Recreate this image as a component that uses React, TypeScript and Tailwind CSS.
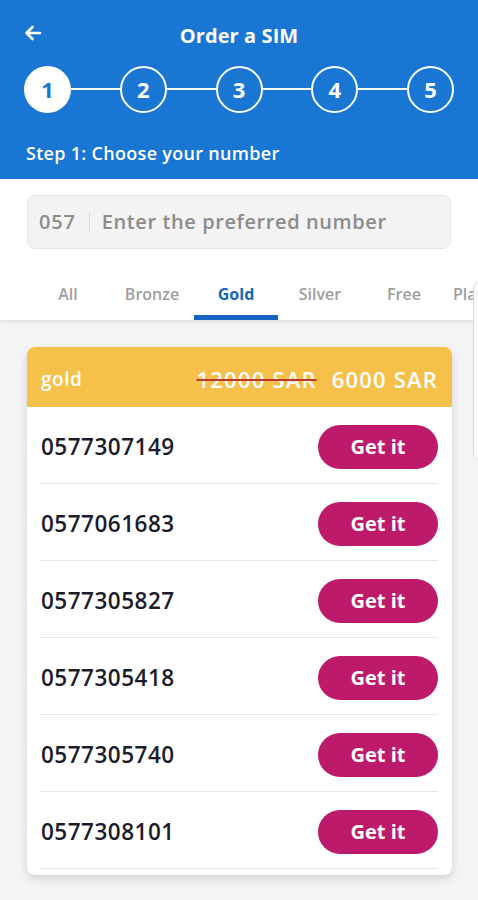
import React from "react";

const numbers = [
  "0577307149",
  "0577061683",
  "0577305827",
  "0577305418",
  "0577305740",
  "0577308101",
];

const tabs = ["All", "Bronze", "Gold", "Silver", "Free", "Platinum"];

export default function App() {
  return (
    <div
      className="relative w-[478px] h-[900px] overflow-hidden bg-[#f4f4f4]"
      style={{ fontFamily: '"Open Sans", "Noto Sans", sans-serif' }}
    >
      {/* Header */}
      <div className="bg-[#1976d2] h-[179px] flex flex-col text-white">
        <div className="relative h-[65px] flex justify-center pt-[22px]">
          <svg
            className="absolute left-[24px] top-[25px]"
            width="18"
            height="16"
            viewBox="0 0 18 16"
            fill="none"
            stroke="white"
            strokeWidth="2.6"
            strokeLinecap="round"
            strokeLinejoin="round"
          >
            <path d="M16 8H2.5M8.5 2L2.5 8l6 6" />
          </svg>
          <div className="text-[20px] leading-[28px] font-bold tracking-[0.1px]">Order a SIM</div>
        </div>
        <div className="flex items-center px-[24px] h-[48px]">
          {[1, 2, 3, 4, 5].map((n, i) => (
            <React.Fragment key={n}>
              {i > 0 && <div className="flex-1 h-[2px] bg-white" />}
              <div
                className={
                  n === 1
                    ? "w-[47px] h-[47px] rounded-full bg-white text-[#1976d2] flex items-center justify-center text-[22px] font-bold"
                    : "w-[47px] h-[47px] rounded-full border-2 border-white text-white flex items-center justify-center text-[22px] font-bold"
                }
              >
                {n}
              </div>
            </React.Fragment>
          ))}
        </div>
        <div className="mt-[28px] px-[26px] text-[18px] leading-[24px] font-semibold tracking-[0.3px]">
          Step 1: Choose your number
        </div>
      </div>

      {/* White area with input and tabs */}
      <div className="bg-white pt-[16px] shadow-[0_2px_3px_rgba(0,0,0,0.08)] relative z-10">
        <div className="mx-[27px] h-[54px] rounded-[8px] bg-[#f3f3f3] border border-[#e4e4e4] flex items-center pl-[11px]">
          <span className="text-[20px] text-[#8c8c8c] font-semibold tracking-[0.8px]">057</span>
          <span className="w-[1px] h-[22px] bg-[#dcdcdc] ml-[13px] mr-[12px]" />
          <span className="text-[20px] text-[#8c8c8c] font-semibold tracking-[0.6px]">
            Enter the preferred number
          </span>
        </div>
        <div className="mt-[21px] flex pl-[26px] overflow-hidden whitespace-nowrap">
          {tabs.map((t) => (
            <div
              key={t}
              className="w-[84px] shrink-0 h-[50px] flex flex-col items-center justify-end"
            >
              <div
                className={
                  t === "Gold"
                    ? "text-[16px] font-bold text-[#1565c0] leading-[20px] mb-[11px]"
                    : "text-[16px] font-semibold text-[#9e9e9e] leading-[20px] mb-[11px]"
                }
              >
                {t}
              </div>
              <div
                className={
                  t === "Gold" ? "w-full h-[5px] bg-[#1565c0]" : "w-full h-[5px] bg-transparent"
                }
              />
            </div>
          ))}
        </div>
      </div>

      {/* Card */}
      <div className="px-[27px] pt-[27px] pr-[26px]">
        <div className="bg-white rounded-[8px] shadow-[0_4px_10px_rgba(0,0,0,0.14)] overflow-hidden">
          <div className="h-[60px] bg-[#f5c14b] flex items-center px-[14px] text-white pt-[4px]">
            <span className="text-[19px] font-semibold tracking-[0.5px]">gold</span>
            <span className="ml-auto text-[22px] font-semibold tracking-[1.2px] line-through decoration-[#b8392c] decoration-2">
              12000 SAR
            </span>
            <span className="ml-[15px] text-[22px] font-semibold tracking-[1.2px]">6000 SAR</span>
          </div>
          <div className="px-[14px]">
            {numbers.map((n) => (
              <div key={n} className="h-[77px] pt-[4px] flex items-center border-b border-[#e6e6e6]">
                <span className="text-[22.5px] font-semibold text-[#1b1b2b] tracking-[0.5px]">
                  {n}
                </span>
                <button className="ml-auto w-[120px] h-[44px] rounded-full bg-[#be1a6b] text-white text-[20px] font-bold">
                  Get it
                </button>
              </div>
            ))}
          </div>
          <div className="h-[6px]" />
        </div>
      </div>

      {/* Peeking next panel on right edge */}
      <div className="absolute left-[473px] top-[282px] w-[20px] h-[178px] rounded-[6px] border border-[#d9d9d9] bg-[#fbfbfb] z-20" />
    </div>
  );
}
